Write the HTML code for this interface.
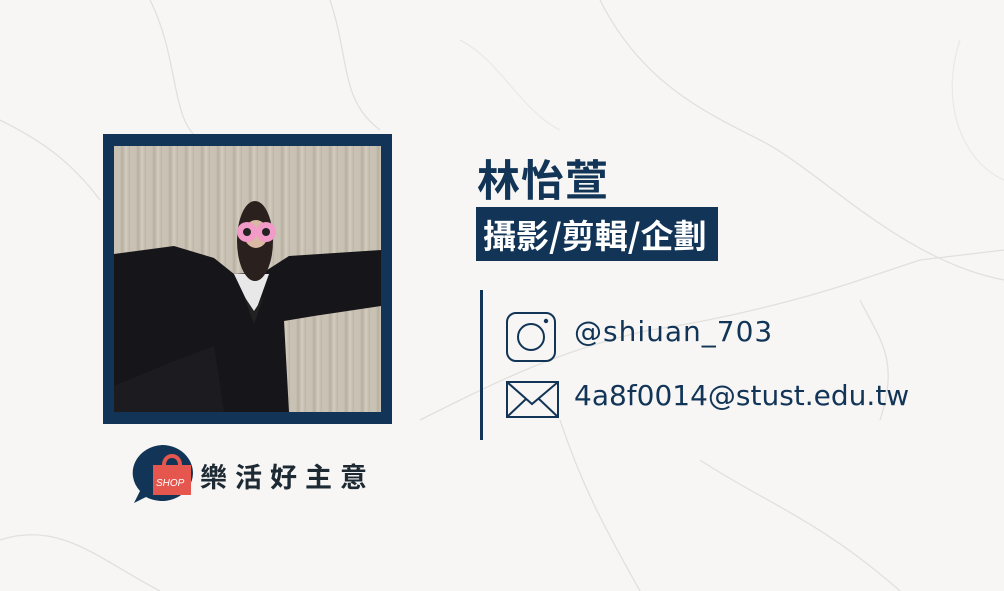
<!DOCTYPE html>
<html><head><meta charset="utf-8"><style>
body{margin:0;width:1004px;height:591px;overflow:hidden;background:#f7f6f5;font-family:"Liberation Sans","Noto Sans CJK TC",sans-serif;position:relative}
.bg{position:absolute;inset:0}
.frame{position:absolute;left:103px;top:134px;width:289px;height:290px;background:#123557}
.photo{position:absolute;left:114px;top:146px;width:267px;height:266px;overflow:hidden;
background:repeating-linear-gradient(90deg,#c9c1b3 0 6px,#b7ae9f 8px,#d3ccbf 12px,#bdb4a5 16px)}
.name{position:absolute;left:477px;top:150px;font-size:43px;font-weight:bold;color:#123557;font-family:"Noto Sans CJK TC",sans-serif;line-height:56px;letter-spacing:1px}
.role{position:absolute;left:476px;top:207px;width:242px;height:54px;background:#123557;color:#fff;font-size:33px;font-weight:bold;font-family:"Noto Sans CJK TC",sans-serif;line-height:54px;padding-left:7px;box-sizing:border-box;white-space:nowrap;letter-spacing:0px}
.vl{position:absolute;left:480px;top:290px;width:3px;height:150px;background:#123557}
.t{position:absolute;left:574px;font-size:28px;color:#123557;font-family:"DejaVu Sans","Liberation Sans",sans-serif}
.logo{position:absolute;left:200px;top:458px;font-size:27px;font-weight:bold;color:#1e2a33;letter-spacing:8px;font-family:"Noto Sans CJK TC",sans-serif;line-height:36px}
</style></head><body>
<svg class="bg" width="1004" height="591" fill="none" stroke="#e2e0dc" stroke-width="1.3">
<path d="M150 0 C180 60 170 120 200 140 M330 0 C350 60 340 100 380 130 M600 0 C640 80 700 110 760 140 C820 170 900 260 1004 280"/>
<path d="M0 120 C40 140 70 160 100 200 M420 420 C500 380 560 350 650 330 C720 320 800 300 860 280 L920 260 L1004 250"/>
<path d="M860 300 C880 340 900 360 880 420 M560 420 C580 480 600 520 640 591 M0 540 C60 520 100 560 160 591 M700 460 C760 500 820 520 900 591"/>
<path d="M460 40 C500 60 520 110 560 130 M960 40 C940 100 960 160 1004 180" stroke="#ebe9e6"/>
</svg>
<div class="frame"></div>
<div class="photo">
<svg width="267" height="266">
<path d="M0 108 L60 100 L100 112 L120 128 L150 126 L175 110 L267 104 L267 160 L200 170 L170 175 L175 266 L30 266 L0 250 Z" fill="#16161a"/>
<path d="M0 240 L60 215 L100 200 L110 266 L0 266Z" fill="#1c1c20"/>
<path d="M120 128 L140 170 L155 128Z" fill="#e8e8e8"/>
<path d="M130 150 L140 178 L150 150 L140 165Z" fill="#222"/>
<ellipse cx="141" cy="95" rx="18" ry="40" fill="#2a201d"/>
<ellipse cx="142" cy="88" rx="12" ry="14" fill="#d9b8a4"/>
<circle cx="133" cy="86" r="10" fill="#f29ac8"/><circle cx="152" cy="86" r="10" fill="#f29ac8"/>
<circle cx="133" cy="86" r="4" fill="#222"/><circle cx="152" cy="86" r="4" fill="#222"/>
</svg>
</div>
<svg style="position:absolute;left:128px;top:443px" width="68" height="62">
<path d="M34 2 A31 28 0 1 1 18 54 L6 60 L12 48 A31 28 0 0 1 34 2Z" fill="#123557"/>
<rect x="25" y="22" width="38" height="30" fill="#e5574e"/>
<path d="M36 22 C36 10 52 10 52 22" stroke="#e5574e" stroke-width="4" fill="none"/>
<text x="28" y="43" font-size="10" fill="#fff" font-style="italic" font-family="Liberation Sans">SHOP</text>
</svg>
<div class="logo">樂活好主意</div>
<div class="name">林怡萱</div>
<div class="role">攝影/剪輯/企劃</div>
<div class="vl"></div>
<svg style="position:absolute;left:505px;top:311px" width="54" height="54" fill="none" stroke="#123557" stroke-width="2">
<rect x="2" y="2" width="48" height="48" rx="9"/><circle cx="26" cy="26" r="13"/><circle cx="41" cy="10" r="1.2" fill="#123557"/>
</svg>
<div class="t" style="top:315px;letter-spacing:1px">@shiuan_703</div>
<svg style="position:absolute;left:505px;top:380px" width="56" height="40" fill="none" stroke="#123557" stroke-width="2">
<rect x="2" y="2" width="51" height="35"/><path d="M2 2 L27 24 L53 2 M2 37 L21 19 M53 37 L34 19"/>
</svg>
<div class="t" style="top:379px">4a8f0014@stust.edu.tw</div>
</body></html>
